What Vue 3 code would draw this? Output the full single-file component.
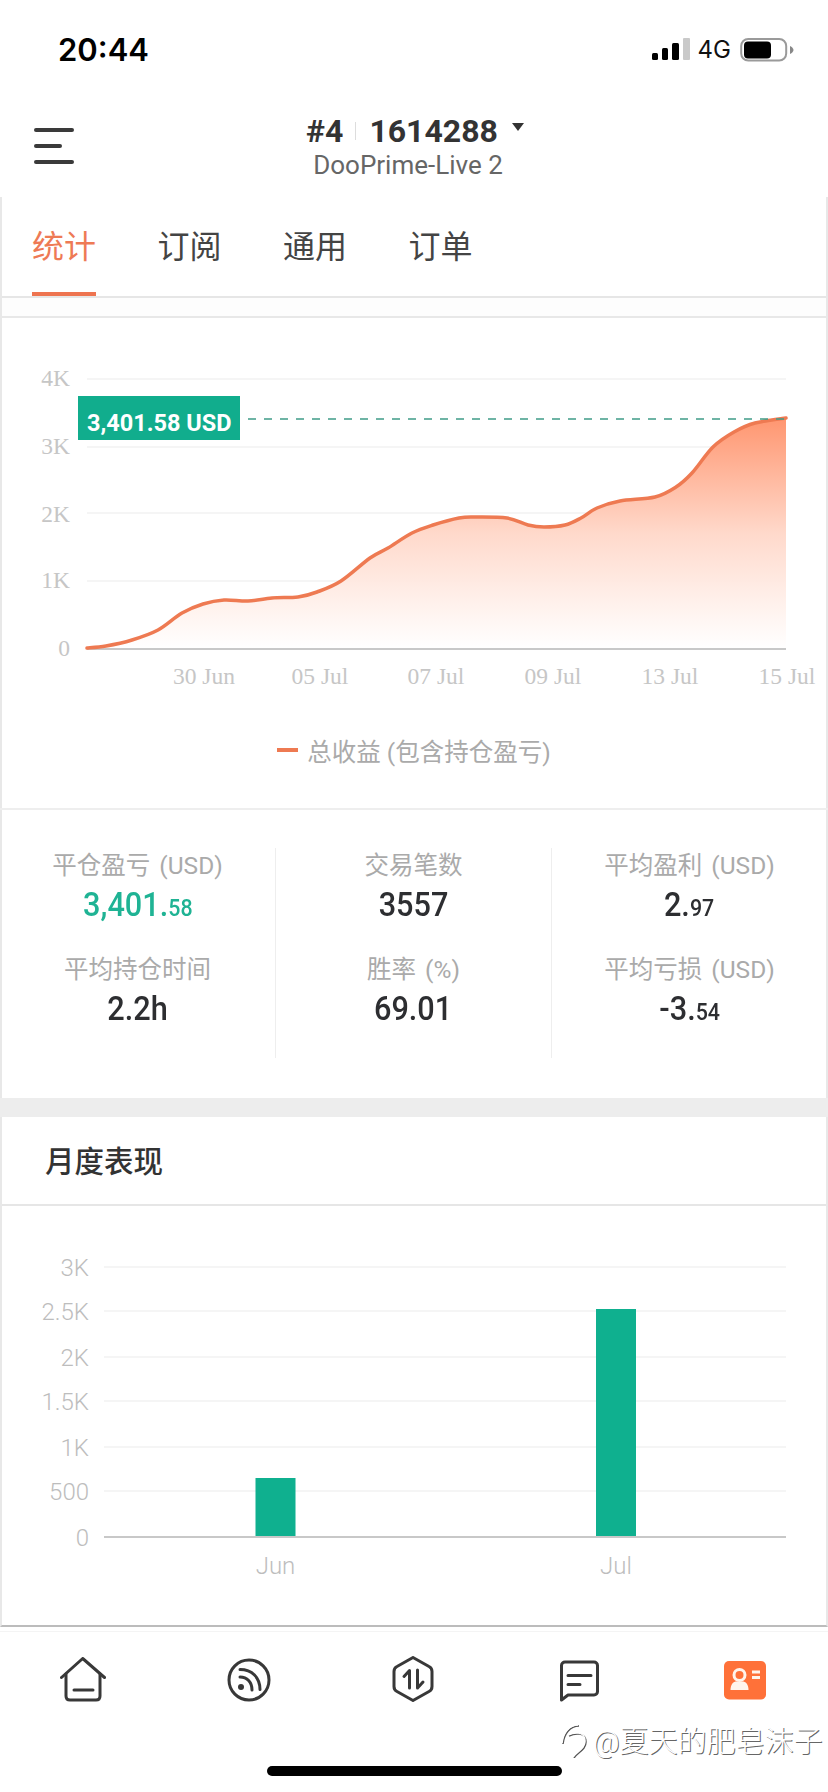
<template>
  <div class="screen">
    <!-- status bar -->
    <div class="status">
      <span class="clock">20:44</span>
      <div class="status-right">
        <svg class="signal" width="38" height="24" viewBox="0 0 38 24">
          <rect x="0" y="15" width="6" height="7" rx="1.5" fill="#000" />
          <rect x="10" y="10" width="6" height="12" rx="1.5" fill="#000" />
          <rect x="20" y="5" width="7" height="17" rx="1.5" fill="#000" />
          <rect x="31" y="0" width="7" height="22" rx="1" fill="#c9c9c9" />
        </svg>
        <span class="net">4G</span>
        <svg class="battery" width="54" height="24" viewBox="0 0 54 24">
          <rect x="1.2" y="1" width="45" height="21.5" rx="7" fill="none" stroke="#9a9a9a" stroke-width="2" />
          <rect x="4" y="3.5" width="27" height="17" rx="4" fill="#000" />
          <path d="M50 8v8c2-1 3.5-2.5 3.5-4S52 9 50 8z" fill="#888" />
        </svg>
      </div>
    </div>

    <!-- header -->
    <div class="topbar">
      <div class="menu"><i></i><i class="short"></i><i></i></div>
      <div class="account">
        <div class="account-line">
          <span>#4</span><b class="sep"></b><span>1614288</span><em class="caret"></em>
        </div>
        <div class="server">DooPrime-Live 2</div>
      </div>
    </div>

    <div class="panel">
      <div class="tabs">
        <div v-for="(t, i) in tabs" :key="t" class="tab" :class="{ active: i === 0 }">{{ t }}</div>
      </div>
      <div class="strip"></div>

      <!-- equity chart -->
      <section class="equity">
        <svg class="chart" width="828" height="408" viewBox="0 0 828 408">
          <defs>
            <linearGradient id="areaFill" x1="0" y1="0" x2="0" y2="1">
              <stop offset="0" stop-color="#ff9670" />
              <stop offset="0.5" stop-color="#ffd9cb" />
              <stop offset="1" stop-color="#ffffff" stop-opacity="0.9" />
            </linearGradient>
          </defs>
          <line v-for="g in equityGrid" :key="g.label" x1="87" x2="786" :y1="g.y" :y2="g.y" class="grid" />
          <text v-for="g in equityGrid" :key="'t' + g.label" x="70" :y="g.base" text-anchor="end" class="serif">{{ g.label }}</text>
          <path :d="areaPath" fill="url(#areaFill)" />
          <line x1="87" x2="786" y1="331" y2="331" class="axis" />
          <path :d="linePath" fill="none" stroke="#ee7a52" stroke-width="3.5" stroke-linecap="round" />
          <line x1="248" x2="786" y1="101" y2="101" stroke="#3f9c88" stroke-width="1.5" stroke-dasharray="8 8" />
          <rect x="78" y="78" width="162" height="44" fill="#11ad8d" />
          <text x="87" y="113" class="tag-text">3,401.58 USD</text>
          <text v-for="d in equityDates" :key="d.label" :x="d.x" y="366" text-anchor="middle" class="serif">{{ d.label }}</text>
        </svg>
        <div class="legend"><i></i><span>总收益 (包含持仓盈亏)</span></div>
      </section>

      <!-- summary numbers -->
      <section class="stats">
        <div v-for="col in stats" :key="col[0].label" class="stat-col">
          <div v-for="s in col" :key="s.label" class="stat">
            <div class="stat-label">{{ s.label }}</div>
            <div class="stat-value" :class="{ up: s.up }"><span>{{ s.main }}<small v-if="s.tail">{{ s.tail }}</small></span></div>
          </div>
        </div>
      </section>

      <div class="band"></div>

      <div class="monthly-title">月度表现</div>

      <!-- monthly bars -->
      <section class="monthly">
        <svg class="chart" width="828" height="419" viewBox="0 0 828 419">
          <line v-for="g in monthGrid" :key="g.label" x1="104" x2="786" :y1="g.y" :y2="g.y" class="grid" />
          <text v-for="g in monthGrid" :key="'t' + g.label" x="89" :y="g.y + 9" text-anchor="end" class="sans">{{ g.label }}</text>
          <rect v-for="b in monthBars" :key="b.label" :x="b.x" :y="b.top" width="40" :height="331 - b.top" fill="#0fb08f" />
          <line x1="104" x2="786" y1="331" y2="331" class="axis" />
          <text v-for="b in monthBars" :key="'l' + b.label" :x="b.x + 20" y="368" text-anchor="middle" class="sans">{{ b.label }}</text>
        </svg>
      </section>
    </div>

    <!-- bottom nav -->
    <nav class="nav">
      <svg class="nav-home" width="46" height="46" viewBox="0 0 46 46" fill="none" stroke="#383838" stroke-width="3" stroke-linecap="round" stroke-linejoin="round">
        <path d="M1.5 20.5L22.7 1.5 44.5 20.5" />
        <path d="M6 17v22c0 3 1.500 4 4 4h26c2.500 0 4-1 4-4V17" />
        <path d="M14 33h19" />
      </svg>
      <svg class="nav-feed" width="44" height="46" viewBox="0 0 44 46" fill="none" stroke="#383838" stroke-width="3" stroke-linecap="round">
        <circle cx="22" cy="23" r="20" />
        <circle cx="14" cy="30" r="3" fill="#383838" stroke="none" />
        <path d="M13 20c7 0 12 5 12 13" />
        <path d="M13 12.500c12 0 20 8 20 20" />
      </svg>
      <svg class="nav-trade" width="42" height="46" viewBox="0 0 42 46" fill="none" stroke="#383838" stroke-width="3" stroke-linecap="round" stroke-linejoin="round">
        <path d="M21 1.500L37 10.500c2 1 3 2.500 3 5v15c0 2.500-1 4-3 5L21 44.500 5 35.500c-2-1-3-2.500-3-5v-15c0-2.500 1-4 3-5z" />
        <path d="M17.500 32V14.500l-5.500 6" />
        <path d="M25.500 32V14M25.500 32l5.500-6" />
      </svg>
      <svg class="nav-msg" width="40" height="42" viewBox="0 0 40 42" fill="none" stroke="#383838" stroke-width="3" stroke-linecap="round" stroke-linejoin="round">
        <path d="M6 2h29c2 0 3.500 1.500 3.500 3.500v26c0 2-1.500 3.500-3.500 3.500H9L2.500 40V5.500C2.500 3.500 4 2 6 2z" />
        <path d="M9 15.500h23M9 24.500h12" />
      </svg>
      <svg class="nav-me" width="44" height="40" viewBox="0 0 44 40">
        <rect x="1" y="1" width="42" height="38.500" rx="5" fill="#ff7139" />
        <circle cx="16.500" cy="15" r="5.500" fill="none" stroke="#fff4ec" stroke-width="3" />
        <path d="M7.500 30c0-6 3-8.500 6-8.500h6c3 0 6 2.500 6 8.500z" fill="#fff4ec" />
        <path d="M29 12h8M29 17.500h8" stroke="#fff4ec" stroke-width="3" />
      </svg>
    </nav>

    <!-- watermark on top of the screenshot -->
    <div class="watermark">
      <svg width="30" height="36" viewBox="0 0 30 36" fill="none" stroke="#fff" stroke-width="1.500">
        <path d="M2 22C3 12 9 4 18 4" />
        <path d="M8 14c6-3 17-4 17 6 0 8-8 10-12 16" />
      </svg>
      <span>@夏天的肥皂沫子</span>
    </div>
    <div class="home-bar"></div>
  </div>
</template>

<script setup>
const tabs = ["统计", "订阅", "通用", "订单"];

const equityGrid = [
  { label: "4K", y: 61, base: 68 },
  { label: "3K", y: 129, base: 136 },
  { label: "2K", y: 195, base: 204 },
  { label: "1K", y: 263, base: 270 },
  { label: "0", y: 331, base: 338 },
];

const equityDates = [
  { label: "30 Jun", x: 204 },
  { label: "05 Jul", x: 320 },
  { label: "07 Jul", x: 436 },
  { label: "09 Jul", x: 553 },
  { label: "13 Jul", x: 670 },
  { label: "15 Jul", x: 787 },
];

// curve read off the screenshot, x / y in chart pixels
const curve = [
  [87, 330], [106, 328], [132, 322], [158, 312], [182, 295], [203, 286], [224, 282],
  [248, 283], [272, 280], [298, 279], [317, 274], [341, 263], [370, 240], [388, 230],
  [412, 215], [433, 207], [459, 200], [475, 199], [507, 200], [528, 207], [544, 209],
  [565, 207], [581, 200], [597, 190], [620, 183], [655, 179], [676, 169], [692, 155],
  [713, 129], [734, 114], [755, 105], [786, 100],
];

// catmull-rom through the points
const smooth = (pts) => {
  let d = `M${pts[0][0]} ${pts[0][1]}`;
  for (let i = 0; i < pts.length - 1; i++) {
    const p0 = pts[i - 1] || pts[i];
    const p1 = pts[i];
    const p2 = pts[i + 1];
    const p3 = pts[i + 2] || p2;
    const c1x = p1[0] + (p2[0] - p0[0]) / 6;
    const c1y = p1[1] + (p2[1] - p0[1]) / 6;
    const c2x = p2[0] - (p3[0] - p1[0]) / 6;
    const c2y = p2[1] - (p3[1] - p1[1]) / 6;
    d += ` C${c1x.toFixed(1)} ${c1y.toFixed(1)} ${c2x.toFixed(1)} ${c2y.toFixed(1)} ${p2[0]} ${p2[1]}`;
  }
  return d;
};

const linePath = smooth(curve);
const areaPath = `${linePath} L786 331 L87 331 Z`;

const stats = [
  [
    { label: "平仓盈亏 (USD)", main: "3,401.", tail: "58", up: true },
    { label: "平均持仓时间", main: "2.2h" },
  ],
  [
    { label: "交易笔数", main: "3557" },
    { label: "胜率 (%)", main: "69.01" },
  ],
  [
    { label: "平均盈利 (USD)", main: "2.", tail: "97" },
    { label: "平均亏损 (USD)", main: "-3.", tail: "54" },
  ],
];

const monthGrid = [
  { label: "3K", y: 61 },
  { label: "2.5K", y: 105 },
  { label: "2K", y: 151 },
  { label: "1.5K", y: 195 },
  { label: "1K", y: 241 },
  { label: "500", y: 285 },
  { label: "0", y: 331 },
];

const monthBars = [
  { label: "Jun", x: 255.5, top: 272 },
  { label: "Jul", x: 596, top: 103 },
];
</script>

<style>
html,
body {
  margin: 0;
  background: #fff;
}
</style>

<style scoped>
.screen {
  position: relative;
  width: 828px;
  height: 1792px;
  overflow: hidden;
  background: #fff;
  font-family: Roboto, "Noto Sans CJK SC", sans-serif;
  color: #333;
}

/* Status bar */
.status {
  height: 99px;
  display: flex;
  align-items: center;
  justify-content: space-between;
  padding: 0 34px 0 58px;
  box-sizing: border-box;
}

.clock {
  font-family: Inter, sans-serif;
  font-size: 31px;
  font-weight: 600;
  color: #000;
}

.status-right {
  display: flex;
  align-items: center;
}

.signal {
  margin-right: 8px;
}

.net {
  font-family: Inter, sans-serif;
  font-size: 24px;
  color: #111;
  margin-right: 9px;
}

/* Header */
.topbar {
  height: 98px;
  position: relative;
  display: flex;
  justify-content: center;
  align-items: center;
  padding-bottom: 5px;
  box-sizing: border-box;
}

.menu {
  position: absolute;
  left: 34px;
  top: 29px;
  width: 40px;
}

.menu i {
  display: block;
  height: 4px;
  margin-bottom: 12px;
  border-radius: 2px;
  background: #3a3a3a;
}

.menu i.short {
  width: 28px;
}

.account {
  text-align: center;
  margin-left: 2px;
}

.account-line {
  display: flex;
  align-items: center;
  height: 38px;
  font-size: 32px;
  font-weight: 700;
  color: #333;
}

.sep {
  width: 1px;
  height: 18px;
  margin: 0 13px 0 12px;
  background: #ddd;
}

.caret {
  width: 0;
  height: 0;
  margin: 0 0 8px 14px;
  border-left: 6.5px solid transparent;
  border-right: 6.5px solid transparent;
  border-top: 8px solid #333;
}

.server {
  font-size: 26px;
  line-height: 30px;
  padding-right: 14px;
  color: #666;
  margin-top: 0;
}

/* Panel */
.panel {
  border-left: 2px solid #e8e8e8;
  border-right: 2px solid #e8e8e8;
  border-bottom: 2px solid #bcbcbc;
  width: 828px;
  box-sizing: border-box;
}

.tabs {
  height: 101px;
  display: flex;
  padding-left: 30px;
  gap: 61.5px;
  box-sizing: border-box;
  border-bottom: 2px solid #e6e6e6;
}

.tab {
  width: 64px;
  height: 99px;
  box-sizing: border-box;
  padding-top: 27px;
  font-size: 32px;
  line-height: 46px;
  text-align: center;
  color: #444;
}

.tab.active {
  color: #ee7a55;
  border-bottom: 4px solid #ee7450;
}

.strip {
  height: 20px;
  box-sizing: border-box;
  border-bottom: 2px solid #e8e8e8;
  background: #fdfdfd;
}

/* Charts */
.chart {
  display: block;
  margin-left: -2px;
}

.grid {
  stroke: #f5f5f5;
  stroke-width: 2;
}

.axis {
  stroke: #c8c8c8;
  stroke-width: 2;
}

.serif {
  font-family: "Liberation Serif", serif;
  font-size: 23.5px;
  fill: #c6c6c6;
}

.sans {
  font-family: Roboto, sans-serif;
  font-size: 24px;
  font-weight: 300;
  fill: #bdbdbd;
}

.tag-text {
  font-family: Roboto, sans-serif;
  font-size: 23.5px;
  font-weight: 700;
  fill: #fff;
}

.equity {
  height: 490px;
}

.legend {
  display: flex;
  justify-content: center;
  align-items: center;
  height: 36px;
  margin-top: 6px;
  font-size: 24.500px;
  color: #aaa;
}

.legend i {
  width: 21px;
  height: 4px;
  margin-right: 9px;
  background: #ee7a52;
}

/* Stats */
.stats {
  height: 290px;
  box-sizing: border-box;
  border-top: 2px solid #eee;
  padding-top: 38px;
  display: flex;
  margin: 0 -2px;
}

.stat-col {
  width: 275px;
  height: 210px;
  text-align: center;
}

.stat-col + .stat-col {
  border-left: 1px solid #eee;
}

.stat {
  height: 104px;
}

.stat-label {
  height: 36px;
  line-height: 36px;
  font-size: 24.500px;
  word-spacing: 3px;
  color: #aaa;
}

.stat-value {
  height: 42px;
  line-height: 42px;
  font-size: 33px;
  font-weight: 500;
  color: #2d2e31;
}

/* the app uses a narrow DIN style face, squeeze Roboto a bit */
.stat-value span {
  display: inline-block;
  transform: scaleX(0.93);
}

.stat-value small {
  font-size: 23px;
}

.stat-value.up {
  color: #1fb394;
}

.band {
  height: 19px;
  margin: 0 -2px;
  background: #ededed;
}

.monthly-title {
  height: 89px;
  box-sizing: border-box;
  padding: 23px 0 0 43px;
  font-size: 29.500px;
  line-height: 44px;
  font-weight: 500;
  color: #333;
  border-bottom: 2px solid #e6e6e6;
}

.monthly {
  height: 419px;
}

/* Bottom nav */
.nav {
  position: relative;
  height: 163px;
  box-sizing: border-box;
  margin-top: 4px;
  border-top: 1px solid #f4f4f4;
}

.nav svg {
  position: absolute;
}

.nav-home {
  left: 60px;
  top: 25px;
}

.nav-feed {
  left: 227px;
  top: 25px;
}

.nav-trade {
  left: 392px;
  top: 24px;
}

.nav-msg {
  left: 559px;
  top: 28px;
}

.nav-me {
  left: 723px;
  top: 28px;
}

/* Watermark */
.watermark {
  position: absolute;
  left: 560px;
  top: 1721px;
  display: flex;
  align-items: center;
  gap: 3px;
  height: 36px;
  font-size: 29px;
  font-weight: 300;
  color: #fff;
  text-shadow: 1px 1px 0 #666;
  white-space: nowrap;
}

.watermark svg {
  filter: drop-shadow(1px 1px 0 #555);
}

.home-bar {
  position: absolute;
  left: 267px;
  top: 1766px;
  width: 295px;
  height: 10px;
  border-radius: 5px;
  background: #000;
}
</style>
